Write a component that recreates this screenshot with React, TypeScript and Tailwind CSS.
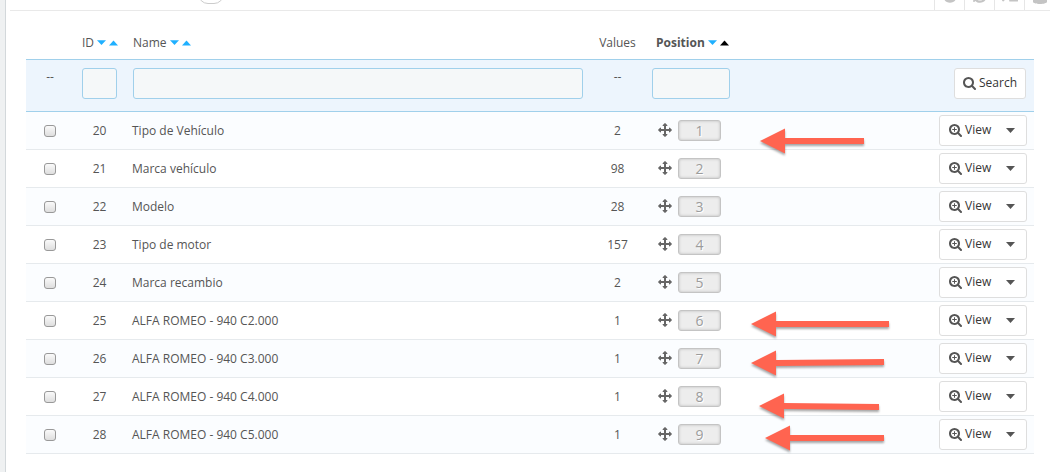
import React from "react";
import { FaDatabase, FaPlusCircle, FaSyncAlt, FaTerminal } from "react-icons/fa";

interface Feature {
  id: number;
  name: string;
  values: number;
  position: number;
}

const features: Feature[] = [
  { id: 20, name: "Tipo de Vehículo", values: 2, position: 1 },
  { id: 21, name: "Marca vehículo", values: 98, position: 2 },
  { id: 22, name: "Modelo", values: 28, position: 3 },
  { id: 23, name: "Tipo de motor", values: 157, position: 4 },
  { id: 24, name: "Marca recambio", values: 2, position: 5 },
  { id: 25, name: "ALFA ROMEO - 940 C2.000", values: 1, position: 6 },
  { id: 26, name: "ALFA ROMEO - 940 C3.000", values: 1, position: 7 },
  { id: 27, name: "ALFA ROMEO - 940 C4.000", values: 1, position: 8 },
  { id: 28, name: "ALFA ROMEO - 940 C5.000", values: 1, position: 9 },
];

// tip and tail of every annotation arrow
const arrows = [
  { x: 760, y: 141, endX: 864, endY: 141 },
  { x: 751, y: 324, endX: 889, endY: 324 },
  { x: 751, y: 363, endX: 884, endY: 362 },
  { x: 759, y: 406, endX: 879, endY: 407 },
  { x: 765, y: 438, endX: 884, endY: 438 },
];

const inputClass =
  "block h-[31px] w-full rounded-[3px] border border-[#a0d0eb] bg-[#f5f8f9] px-2 outline-none";

const toolClass =
  "flex h-7 w-[30px] shrink-0 items-center justify-center border-l border-[#e6e6e6]";

function SearchIcon({ plus = false }: { plus?: boolean }) {
  return (
    <svg viewBox="64 128 1664 1664" className="size-[13px] shrink-0 fill-[#555]" aria-hidden="true">
      <path d="M1216 832q0-185-131.5-316.5t-316.5-131.5-316.5 131.5-131.5 316.5 131.5 316.5 316.5 131.5 316.5-131.5 131.5-316.5zm512 832q0 52-38 90t-90 38q-54 0-90-38l-343-342q-179 124-399 124-143 0-273.5-55.5t-225-150-150-225-55.5-273.5 55.5-273.5 150-225 225-150 273.5-55.5 273.5 55.5 225 150 150 225 55.5 273.5q0 220-124 399l343 343q37 37 37 90z" />
      {plus && <path d="M704 544h128v224h224v128h-224v224h-128v-224h-224v-128h224z" />}
    </svg>
  );
}

function MoveIcon() {
  return (
    <svg viewBox="0 0 1792 1792" className="size-[14px] shrink-0 fill-[#666]" aria-hidden="true">
      <path d="M1792 896q0 26-19 45l-256 256q-19 19-45 19t-45-19-19-45v-128h-384v384h128q26 0 45 19t19 45-19 45l-256 256q-19 19-45 19t-45-19l-256-256q-19-19-19-45t19-45 45-19h128v-384h-384v128q0 26-19 45t-45 19-45-19l-256-256q-19-19-19-45t19-45l256-256q19-19 45-19t45 19 19 45v128h384v-384h-128q-26 0-45-19t-19-45 19-45l256-256q19-19 45-19t45 19l256 256q19 19 19 45t-19 45-45 19h-128v384h384v-128q0-26 19-45t45-19 45 19l256 256q19 19 19 45z" />
    </svg>
  );
}

function SortLinks({ column, active = false }: { column: string; active?: boolean }) {
  return (
    <span className="flex gap-[3px]">
      <a href="#desc" aria-label={`Sort ${column} descending`}>
        <svg viewBox="0 0 9 6" className="h-[6px] w-[9px] fill-[#1fb0ff]">
          <path d="M0 0.2h9L4.5 5z" />
        </svg>
      </a>
      <a href="#asc" aria-label={`Sort ${column} ascending`}>
        <svg viewBox="0 0 9 6" className={`h-[6px] w-[9px] ${active ? "fill-black" : "fill-[#1fb0ff]"}`}>
          <path d="M0 5.4h9L4.5 0.6z" />
        </svg>
      </a>
    </span>
  );
}

function Toolbar() {
  return (
    <div className="ml-1 flex h-[11px] items-end overflow-hidden border-b border-[#e9e9e9]">
      <span className="mb-[6px] ml-[188px] h-5 w-[26px] rounded-full border border-[#ccc]" />
      <div className="ml-auto flex w-[116px] shrink-0 text-[#c4c4c4]">
        <button aria-label="Add new" className={toolClass}>
          <FaPlusCircle size={14} />
        </button>
        <button aria-label="Refresh list" className={toolClass}>
          <FaSyncAlt size={14} />
        </button>
        <button aria-label="Show SQL query" className={toolClass}>
          <FaTerminal size={16} />
        </button>
        <button aria-label="Export to SQL Manager" className={toolClass}>
          <FaDatabase size={16} />
        </button>
      </div>
    </div>
  );
}

function FeatureRow({ feature }: { feature: Feature }) {
  return (
    <tr className="border-b border-[#e6eaed] odd:bg-[#fbfdff]">
      <td className="pt-[2px]">
        <input
          type="checkbox"
          aria-label={`Select ${feature.name}`}
          className="mx-auto block size-3 appearance-none rounded-[3px] border border-[#999] bg-linear-to-b from-[#fafafa] to-[#dedede]"
        />
      </td>
      <td className="pt-[2px] text-center">{feature.id}</td>
      <td className="pt-[2px] pl-[7px]">{feature.name}</td>
      <td className="pt-[2px] text-center">{feature.values}</td>
      <td>
        <div className="flex items-center gap-[6px] pl-[14px]">
          <MoveIcon />
          <span className="h-[21px] w-[43px] rounded-[3px] border border-[#c4c4c4] bg-[#ededed] text-center text-sm leading-[19px] text-[#9c9c9c] shadow-[inset_0_0_3px_#bbb] [text-shadow:1px_1px_0_#fff]">
            {feature.position}
          </span>
        </div>
      </td>
      <td className="py-[3px] pr-[7px]">
        <div className="ml-auto flex h-[31px] w-[88px] rounded-[3px] border border-[#dedede] bg-white text-[#363636]">
          <button className="flex flex-1 items-center gap-[3px] pl-[9px]">
            <SearchIcon plus />
            View
          </button>
          <button aria-label="More actions" className="flex w-[31px] items-center justify-center">
            <svg viewBox="0 0 9 5" className="h-[5px] w-[9px] fill-[#555]">
              <path d="M0 0h9L4.5 5z" />
            </svg>
          </button>
        </div>
      </td>
    </tr>
  );
}

function Arrows() {
  return (
    <svg
      className="pointer-events-none absolute top-0 left-0 h-[472px] w-[1050px] fill-[#ff6450] drop-shadow-[0_2px_1px_rgba(0,0,0,0.35)]"
      viewBox="0 0 1050 472"
      aria-hidden="true"
    >
      {arrows.map((a) => (
        <path
          key={a.y}
          d={`M${a.x} ${a.y}L${a.x + 25} ${a.y - 12.5}V${a.y - 3}L${a.endX} ${a.endY - 3}v6L${a.x + 25} ${a.y + 3}v9.5z`}
        />
      ))}
    </svg>
  );
}

export default function App() {
  return (
    <div className="relative min-h-screen overflow-hidden bg-[#eff1f2] pl-[5px] font-['Open_Sans','Noto_Sans',sans-serif] text-xs text-[#555]">
      <main className="min-h-screen border-l border-[#d3d8db] bg-white">
        <Toolbar />
        <div className="mr-4 ml-5 pt-4">
          <table className="w-full table-fixed border-collapse">
            <colgroup>
              <col className="w-12" />
              <col className="w-[51px]" />
              <col />
              <col className="w-[53px]" />
              <col className="w-[94px]" />
              <col className="w-[296px]" />
            </colgroup>
            <thead>
              <tr className="h-8">
                <th />
                <th className="pl-2 font-normal">
                  <div className="flex items-center gap-[3px]">
                    ID
                    <SortLinks column="ID" />
                  </div>
                </th>
                <th className="pl-2 font-normal">
                  <div className="flex items-center gap-[3px]">
                    Name
                    <SortLinks column="Name" />
                  </div>
                </th>
                <th className="font-normal">Values</th>
                <th className="pl-3 font-bold">
                  <div className="flex items-center gap-[3px]">
                    Position
                    <SortLinks column="Position" active />
                  </div>
                </th>
                <th />
              </tr>
              <tr className="h-[52px] border-y border-[#a0d0eb] bg-[#edf5fd] align-top">
                <td className="pt-[9px] text-center">--</td>
                <td className="px-2 pt-2">
                  <input type="text" aria-label="Filter by ID" className={inputClass} />
                </td>
                <td className="px-2 pt-2">
                  <input type="text" aria-label="Filter by name" className={inputClass} />
                </td>
                <td className="pt-[9px] text-center">--</td>
                <td className="px-2 pt-2">
                  <input type="text" aria-label="Filter by position" className={inputClass} />
                </td>
                <td className="pt-2 pr-2">
                  <button className="ml-auto flex h-[31px] w-[72px] items-center justify-center gap-[3px] rounded-[3px] border border-[#dedede] bg-white text-[#363636]">
                    <SearchIcon />
                    Search
                  </button>
                </td>
              </tr>
            </thead>
            <tbody>
              {features.map((feature) => (
                <FeatureRow key={feature.id} feature={feature} />
              ))}
            </tbody>
          </table>
        </div>
      </main>
      <Arrows />
    </div>
  );
}
